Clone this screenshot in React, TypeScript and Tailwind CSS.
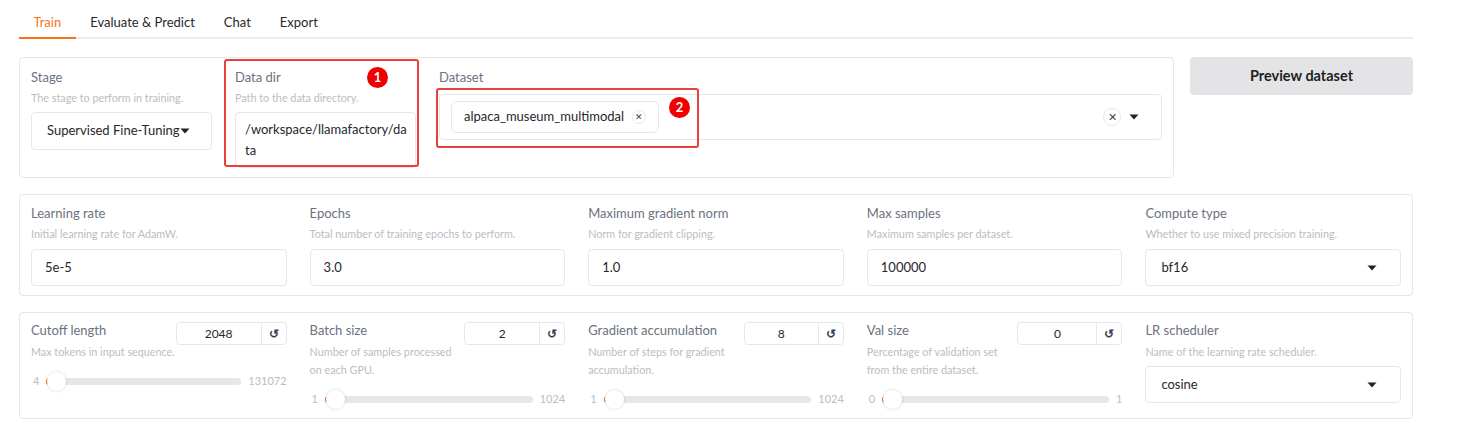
import React from "react";

const FONT = { fontFamily: "Lato, 'Open Sans', sans-serif" };

function Label({ children }: { children: React.ReactNode }) {
  return <div className="text-[13px] leading-[18px] text-[#6b7280]">{children}</div>;
}
function Desc({ children }: { children: React.ReactNode }) {
  return <div className="text-[10.8px] leading-[18px] text-[#b9bdc4]">{children}</div>;
}
function Caret() {
  return (
    <svg width="10" height="6" viewBox="0 0 10 6" className="shrink-0">
      <path d="M0.5 0.5 L9.5 0.5 L5 5.5 Z" fill="#222" />
    </svg>
  );
}

function TextBox({ value }: { value: string }) {
  return (
    <div className="h-[37px] rounded-[4px] border border-[#e5e7eb] bg-white px-[13px] flex items-center text-[13px] text-[#27272a]">
      {value}
    </div>
  );
}

function SelectBox({ value }: { value: string }) {
  return (
    <div className="h-[37px] rounded-[4px] border border-[#e5e7eb] bg-white pl-[15px] pr-[23px] flex items-center justify-between text-[13px] text-[#27272a]">
      <span>{value}</span>
      <Caret />
    </div>
  );
}

function Field({ label, desc, value, select }: { label: string; desc: string; value: string; select?: boolean }) {
  return (
    <div className="flex flex-col">
      <div className="h-[20px] flex items-center"><Label>{label}</Label></div>
      <div className="mt-[1px] h-[20px] flex items-center"><Desc>{desc}</Desc></div>
      <div className="mt-[5px]">{select ? <SelectBox value={value} /> : <TextBox value={value} />}</div>
    </div>
  );
}

function SliderField({
  label,
  desc,
  value,
  min,
  max,
  numW,
}: {
  label: string;
  desc: string[];
  value: string;
  min: string;
  max: string;
  numW: number;
}) {
  return (
    <div className="flex flex-col">
      <div className="flex items-start justify-between h-[23px]">
        <div className="h-[20px] -mt-[2px] flex items-center"><Label>{label}</Label></div>
        <div className="flex h-[23px] rounded-[4px] border border-[#e5e7eb] bg-white text-[12px] text-[#27272a]">
          <div className="flex items-center justify-center" style={{ width: numW }}>{value}</div>
          <div className="w-[25px] border-l border-[#e5e7eb] flex items-center justify-center text-[12px] font-bold text-[#374151]">↺</div>
        </div>
      </div>
      <div className="-mt-[2px]">
        {desc.map((d) => (
          <Desc key={d}>{d}</Desc>
        ))}
      </div>
      <div className="mt-[10px] h-[20px] flex items-center gap-[7px] text-[11px] text-[#b9bdc4]">
        <span className="pl-[2px]">{min}</span>
        <div className="relative flex-1 h-[7px] rounded-full bg-[#e5e7eb]">
          <div className="absolute left-0 top-0 h-[7px] w-[6px] rounded-l-full bg-[#f97316]" />
          <div className="absolute left-[1px] top-[-6px] h-[19px] w-[19px] rounded-full bg-white shadow-[0_0_3px_rgba(0,0,0,0.18)]" />
        </div>
        <span>{max}</span>
      </div>
    </div>
  );
}

function Badge({ n, className }: { n: string; className: string }) {
  return (
    <div
      className={
        "absolute w-[21px] h-[21px] rounded-full bg-[#f00000] text-white text-[13px] font-bold flex items-center justify-center " +
        className
      }
    >
      {n}
    </div>
  );
}

export default function App() {
  return (
    <div style={FONT} className="w-[1463px] h-[428px] bg-white overflow-hidden">
      <div className="w-[1394px] ml-[19px]">
        {/* Tabs */}
        <div className="flex border-b-2 border-[#ececec] h-[39px] pt-[12px]">
          {["Train", "Evaluate & Predict", "Chat", "Export"].map((t, i) => (
            <div
              key={t}
              className={
                "px-[14.5px] text-[13px] leading-[20px] h-[27px] -mb-[2px] " +
                (i === 0 ? "text-[#f97316] border-b-2 border-[#f97316]" : "text-[#27272a]")
              }
            >
              {t}
            </div>
          ))}
        </div>

        {/* Row 1 */}
        <div className="flex gap-[16px] mt-[18px]">
          <div className="w-[1155px] rounded-[4px] border border-[#e5e7eb] px-[11px] pt-[9px] pb-[9px]">
            <div className="grid grid-cols-[181px_181px_1fr] gap-[23px]">
              <div className="flex flex-col">
                <div className="h-[20px] flex items-center"><Label>Stage</Label></div>
                <div className="mt-[1px] h-[20px] flex items-center"><Desc>The stage to perform in training.</Desc></div>
                <div className="mt-[4px] h-[38px] rounded-[4px] border border-[#e5e7eb] pl-[15px] flex items-center text-[13px] text-[#27272a]">
                  <span>Supervised Fine-Tuning</span>
                  <Caret />
                </div>
              </div>
              <div className="relative flex flex-col">
                <div className="h-[20px] flex items-center"><Label>Data dir</Label></div>
                <div className="mt-[1px] h-[20px] flex items-center"><Desc>Path to the data directory.</Desc></div>
                <div className="mt-[4px] rounded-[4px] border border-[#e5e7eb] px-[9px] py-[6px] text-[13px] leading-[21px] text-[#27272a]">
                  /workspace/llamafactory/da
                  <br />
                  ta
                </div>
                <div className="absolute left-[-11px] right-[-3px] top-[-8px] bottom-[1px] border-2 border-[#e8403a] rounded-[3px] pointer-events-none" />
                <Badge n="1" className="left-[132px] top-[0px]" />
              </div>
              <div className="relative flex flex-col">
                <div className="h-[20px] flex items-center"><Label>Dataset</Label></div>
                <div className="mt-[7px] h-[46px] rounded-[4px] border border-[#e5e7eb] pl-[11px] pr-[22px] flex items-center justify-between">
                  <div className="h-[32px] rounded-[6px] border border-[#e5e7eb] pl-[12px] pr-[12px] flex items-center gap-[8px] text-[13px] text-[#27272a]">
                    <span>alpaca_museum_multimodal</span>
                    <div className="w-[14px] h-[14px] rounded-full border border-[#e5e7eb] flex items-center justify-center text-[9px] text-[#444]">✕</div>
                  </div>
                  <div className="flex items-center gap-[8px]">
                    <div className="w-[18px] h-[18px] rounded-full border border-[#e5e7eb] flex items-center justify-center text-[11px] text-[#444]">✕</div>
                    <Caret />
                  </div>
                </div>
                <div className="absolute left-[-3px] w-[263px] top-[21px] h-[60px] border-2 border-[#e8403a] rounded-[3px] pointer-events-none" />
                <Badge n="2" className="left-[230px] top-[30px]" />
              </div>
            </div>
          </div>
          <div className="w-[223px] h-[38px] rounded-[4px] bg-[#e4e4e7] flex items-center justify-center text-[14.5px] font-bold text-[#1f1f1f]">
            Preview dataset
          </div>
        </div>

        {/* Row 2 */}
        <div className="mt-[16px] rounded-[4px] border border-[#e5e7eb] px-[11px] pt-[8px] pb-[9px]">
          <div className="grid grid-cols-5 gap-[23px]">
            <Field label="Learning rate" desc="Initial learning rate for AdamW." value="5e-5" />
            <Field label="Epochs" desc="Total number of training epochs to perform." value="3.0" />
            <Field label="Maximum gradient norm" desc="Norm for gradient clipping." value="1.0" />
            <Field label="Max samples" desc="Maximum samples per dataset." value="100000" />
            <Field label="Compute type" desc="Whether to use mixed precision training." value="bf16" select />
          </div>
        </div>

        {/* Row 3 */}
        <div className="mt-[16px] h-[107px] rounded-[4px] border border-[#e5e7eb] px-[11px] pt-[9px]">
          <div className="grid grid-cols-5 gap-[23px]">
            <SliderField label="Cutoff length" desc={["Max tokens in input sequence."]} value="2048" min="4" max="131072" numW={84} />
            <SliderField label="Batch size" desc={["Number of samples processed", "on each GPU."]} value="2" min="1" max="1024" numW={74} />
            <SliderField label="Gradient accumulation" desc={["Number of steps for gradient", "accumulation."]} value="8" min="1" max="1024" numW={73} />
            <SliderField label="Val size" desc={["Percentage of validation set", "from the entire dataset."]} value="0" min="0" max="1" numW={78} />
            <div className="flex flex-col">
              <div className="h-[20px] flex items-center -mt-[2px]"><Label>LR scheduler</Label></div>
              <div className="mt-[3px]"><Desc>Name of the learning rate scheduler.</Desc></div>
              <div className="mt-[5px]"><SelectBox value="cosine" /></div>
            </div>
          </div>
        </div>
      </div>
    </div>
  );
}
